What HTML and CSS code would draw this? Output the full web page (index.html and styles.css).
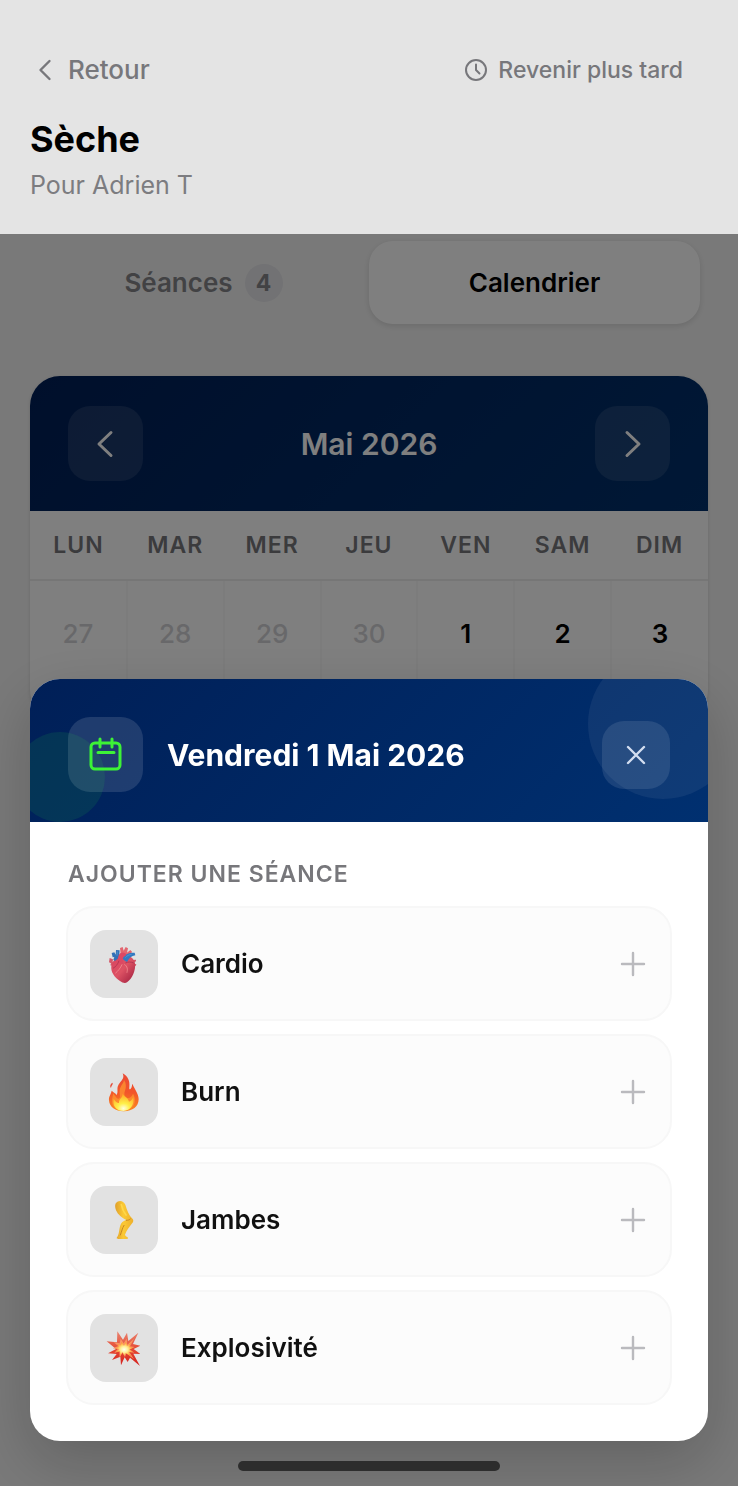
FILE: index.html
```html
<!DOCTYPE html>
<html lang="fr">
<head>
  <meta charset="UTF-8" />
  <meta name="viewport" content="width=device-width, initial-scale=1.0" />
  <title>Sèche</title>
  <link rel="stylesheet" href="styles.css">
</head>
<body>
  <header class="page-header">
    <div class="header-actions">
      <button class="link-btn back" type="button">
        <svg width="30" height="30" viewBox="0 0 30 30"><path d="M19.5 6L10.500 15l9 9" /></svg>
        Retour
      </button>
      <button class="link-btn later" type="button">
        <svg width="24" height="24" viewBox="0 0 24 24"><circle cx="12" cy="12" r="10" /><path d="M12 6.5V12l3.5 3.5" /></svg>
        Revenir plus tard
      </button>
    </div>
    <h1>Sèche</h1>
    <p class="subtitle">Pour Adrien T</p>
  </header>

  <main class="content">
    <nav class="tabs">
      <button class="tab" type="button">Séances <span class="badge">4</span></button>
      <button class="tab active" type="button">Calendrier</button>
    </nav>

    <section class="calendar">
      <div class="calendar-header">
        <button class="nav-btn" type="button" aria-label="Mois précédent">
          <svg width="36" height="36" viewBox="0 0 36 36"><path d="M23 6.500L11 18l12 11.500" /></svg>
        </button>
        <h2>Mai 2026</h2>
        <button class="nav-btn" type="button" aria-label="Mois suivant">
          <svg width="36" height="36" viewBox="0 0 36 36"><path d="M13 6.500L25 18L13 29.500" /></svg>
        </button>
      </div>
      <table class="days">
        <thead>
          <tr><th>LUN</th><th>MAR</th><th>MER</th><th>JEU</th><th>VEN</th><th>SAM</th><th>DIM</th></tr>
        </thead>
        <tbody>
          <tr>
            <td class="out">27</td>
            <td class="out">28</td>
            <td class="out">29</td>
            <td class="out">30</td>
            <td>1</td>
            <td>2</td>
            <td>3</td>
          </tr>
        </tbody>
      </table>
    </section>
  </main>

  <!-- Popup du jour -->
  <div class="overlay">
    <div class="modal" role="dialog" aria-labelledby="modalTitle">
      <div class="modal-header">
        <div class="modal-icon">
          <svg width="36" height="36" viewBox="0 0 36 36"><rect x="3" y="6" width="29" height="26" rx="4" /><path d="M12 2v8M24 2v8M10 15.500h16" /></svg>
        </div>
        <h2 id="modalTitle">Vendredi 1 Mai 2026</h2>
        <button class="close-btn" type="button" aria-label="Fermer">
          <svg width="24" height="24" viewBox="0 0 24 24"><path d="M4 4l16 16M20 4L4 20" /></svg>
        </button>
      </div>
      <div class="modal-body">
        <h3>AJOUTER UNE SÉANCE</h3>
        <div class="sessions">
          <button class="session" type="button">
            <span class="session-icon">
              <svg width="40" height="40" viewBox="0 0 120 120">
                <defs>
                  <linearGradient id="heart" x1="0" y1="0" x2="1" y2="1">
                    <stop offset="0" stop-color="#d9435f" /><stop offset=".5" stop-color="#dd5264" /><stop offset="1" stop-color="#9c1c3c" />
                  </linearGradient>
                </defs>
                <path d="M50 30L48 12l8-3 3 11 6-11 7 4-3 13 10-8 5 5-9 18-22 6z" fill="#e2656f" />
                <path d="M17 42l10 4-1 8 8 5-6 8-9-3 2-6-6-3zM84 48l12-1v5l-8 4zM86 58l11 3-2 5-10-2z" fill="#d4586a" />
                <path d="M28 52C38 36 54 30 66 36c12-2 25 8 27 22 3 22-9 47-24 57-6 4-14 1-21-4C31 100 20 84 22 67c1-6 3-11 6-15z" fill="url(#heart)" />
                <path d="M26 40l-3-13 8-2 4 7 1-14 11 1-1 15c0 8-5 11-13 17l-5-4 3-8z" fill="#326fb7" />
                <path d="M55 43c5-11 18-17 37-17l2 8c-12 2-18 8-25 20-5-2-10-6-14-11z" fill="#3479c0" />
                <path d="M44 56c-5-17 1-32 15-30 9 1 9 9 3 11-8 4-8 15-3 25z" fill="#dc4864" />
                <path d="M54 62c-5 11-11 18-19 25M62 62c9 5 9 14 7 23" fill="none" stroke="#ee8288" stroke-width="3" stroke-linecap="round" />
                <path d="M45 50c-4 12-10 18-18 23M64 57c9-4 17-4 25 0" fill="none" stroke="#a32b4d" stroke-width="2" />
                <path d="M40 22l-1 13M64 41c5-6 11-9 19-10" fill="none" stroke="#5f9fd6" stroke-width="2" />
              </svg>
            </span>
            <span class="session-name">Cardio</span>
            <svg class="plus" width="28" height="28" viewBox="0 0 28 28"><path d="M14 3v22M3 14h22" /></svg>
          </button>

          <button class="session" type="button">
            <span class="session-icon">
              <svg width="40" height="40" viewBox="0 0 120 120">
                <defs>
                  <linearGradient id="flame" x1="0" y1="0" x2="0" y2="1">
                    <stop offset="0" stop-color="#ea4a35" /><stop offset=".5" stop-color="#f2552a" /><stop offset="1" stop-color="#fb8a1f" />
                  </linearGradient>
                  <radialGradient id="core" cx=".5" cy=".85" r=".75">
                    <stop offset="0" stop-color="#fffde0" /><stop offset=".4" stop-color="#fff04a" /><stop offset="1" stop-color="#ffb52a" />
                  </radialGradient>
                </defs>
                <path d="M56 4c16 9 22 23 20 40-1 8 1 10 4 6 4-4 3-10 6-15 2 13 18 27 18 47 0 22-19 35-43 36-25 1-45-12-46-33-1-12 5-16 8-29 8 8 13 7 14 13 6-7 2-17 4-25 2-9 13-17 16-25 2-5 1-10-1-15z" fill="url(#flame)" />
                <path d="M60 24c7 10 7 22 3 32-4 11-1 19 7 22 8 2 14-5 17-13 7 12 8 25 1 36-7 10-18 14-31 14-20 0-34-12-33-29 0-8 3-14 3-22 8 8 10 17 17 16 8-1 1-15 3-26 2-13 11-18 13-30z" fill="#ff9a30" opacity=".7" />
                <path d="M56 66c7 10 16 11 19 23 9-3 10-9 13-13 4 23-9 40-29 41-23 0-34-16-30-37 6 9 9 12 16 13-1-11 10-15 11-27z" fill="url(#core)" />
                <path d="M25 32c4 4-3 8-4 16-5-6-1-12 4-16z" fill="#e54a36" />
              </svg>
            </span>
            <span class="session-name">Burn</span>
            <svg class="plus" width="28" height="28" viewBox="0 0 28 28"><path d="M14 3v22M3 14h22" /></svg>
          </button>

          <button class="session" type="button">
            <span class="session-icon">
              <svg width="40" height="40" viewBox="0 0 120 120">
                <defs>
                  <linearGradient id="leg" x1="0" y1="0" x2="1" y2="0">
                    <stop offset="0" stop-color="#dfa02c" /><stop offset=".45" stop-color="#fbc934" /><stop offset="1" stop-color="#eeb02c" />
                  </linearGradient>
                </defs>
                <path d="M36 9c7-10 23-8 28 5 5 17 10 31 22 43 3 4 2 8-1 12-7 10-17 20-22 35 1 4 6 6 9 9 1 3-1 4-5 4H42c-5 0-5-4-1-8 6-11 4-28 11-39 4-6 9-8 15-10-13-6-25-15-31-29-3-8-4-16 0-23z" fill="url(#leg)" />
                <path d="M67 61c5 0 9-1 12-4M60 76c-5 8-7 19-11 29" fill="none" stroke="#c98522" stroke-width="3" stroke-linecap="round" />
                <path d="M52 14c2 12 7 22 14 31" fill="none" stroke="#ffd84a" stroke-width="5" stroke-linecap="round" />
              </svg>
            </span>
            <span class="session-name">Jambes</span>
            <svg class="plus" width="28" height="28" viewBox="0 0 28 28"><path d="M14 3v22M3 14h22" /></svg>
          </button>

          <button class="session" type="button">
            <span class="session-icon">
              <svg width="40" height="40" viewBox="0 0 120 120">
                <defs>
                  <linearGradient id="burst" x1="0" y1="0" x2="0" y2="1">
                    <stop offset="0" stop-color="#e98572" /><stop offset=".5" stop-color="#e54a33" /><stop offset="1" stop-color="#d4201e" />
                  </linearGradient>
                  <radialGradient id="glow">
                    <stop offset="0" stop-color="#fffff0" /><stop offset=".4" stop-color="#fff09a" /><stop offset=".8" stop-color="#ffb33e" /><stop offset="1" stop-color="#f7853a" />
                  </radialGradient>
                </defs>
                <path d="M40 10l17 25 12-21 4 25 30-25-16 34 22 5-20 10 20 15-21-1 20 37-30-25-7 13-9-14-11 24-2-26-25 10 14-18-26-2 24-13L8 40l31 3z" fill="url(#burst)" />
                <path d="M50 32l9 14 9-14 2 18 20-18-12 23 14 2-15 7 14 10-15-2 14 22-23-18-4 11-8-13-8 15-1-19-15 5 10-12-15-2 17-7-14-11 18 3z" fill="#fa9560" />
                <path d="M52 42l8 11 6-11 3 13 13-11-7 13 12 2-12 6 10 8-12-2 10 16-18-12-4 7-5-10-8 11v-13l-11 2 9-9-12-2 12-5-8-7 13 3z" fill="url(#glow)" />
              </svg>
            </span>
            <span class="session-name">Explosivité</span>
            <svg class="plus" width="28" height="28" viewBox="0 0 28 28"><path d="M14 3v22M3 14h22" /></svg>
          </button>
        </div>
      </div>
    </div>
    <div class="home-bar"></div>
  </div>
</body>
</html>
```
FILE: styles.css
```css
* {
  box-sizing: border-box;
}
body, html {
  margin: 0;
  padding: 0;
  height: 100%;
  font-family: Inter, 'Liberation Sans', sans-serif;
  background-color: #f3f3f3;
  color: #000;
  overflow: hidden;
}
button {
  font-family: inherit;
  border: none;
  padding: 0;
  background: none;
  color: inherit;
  cursor: pointer;
}
h1, h2, h3, p {
  margin: 0;
}
svg {
  display: block;
  flex-shrink: 0;
}
.page-header {
  position: relative;
  z-index: 20;
  background: #e4e4e4;
  padding: 53px 30px 32px;
}
.header-actions {
  display: flex;
  justify-content: space-between;
  align-items: center;
}
.link-btn {
  display: flex;
  align-items: center;
  gap: 8px;
  font-size: 26px;
  line-height: 34px;
  font-weight: 500;
  color: #77777b;
}
.link-btn svg {
  fill: none;
  stroke: currentColor;
  stroke-width: 2.4;
  stroke-linecap: round;
  stroke-linejoin: round;
}
.later {
  font-size: 23px;
  gap: 10px;
  margin-right: 25px;
}
.later svg {
  stroke-width: 2;
}
h1 {
  font-size: 36px;
  line-height: 46px;
  font-weight: 700;
  margin-top: 29px;
}
.subtitle {
  font-size: 25px;
  line-height: 34px;
  margin-top: 6px;
  color: #7c7c80;
}
.content {
  padding: 0 30px;
}
.tabs {
  display: flex;
  padding: 7px 8px 8px;
}
.tab {
  flex: 1;
  display: flex;
  align-items: center;
  justify-content: center;
  gap: 12px;
  height: 83px;
  border-radius: 24px;
  font-size: 26px;
  font-weight: 600;
  color: #858589;
}
.tab.active {
  background: #fff;
  color: #000;
  box-shadow: 0 2px 6px rgba(0, 0, 0, 0.12);
}
.badge {
  width: 38px;
  line-height: 38px;
  border-radius: 50%;
  background: #e4e4e8;
  font-size: 23px;
  font-weight: 700;
}
.calendar {
  margin-top: 44px;
  border-radius: 30px;
  background: #fff;
  overflow: hidden;
  box-shadow: 0 1px 4px rgba(0, 0, 0, 0.12);
}
.calendar-header {
  display: flex;
  align-items: center;
  justify-content: space-between;
  padding: 30px 38px;
  background: linear-gradient(135deg, #001f57, #00306c);
}
.calendar-header h2 {
  font-size: 30px;
  font-weight: 600;
  color: #fff;
}
.nav-btn {
  width: 75px;
  height: 75px;
  border-radius: 22px;
  display: flex;
  align-items: center;
  justify-content: center;
  background: rgba(255, 255, 255, 0.1);
}
.nav-btn svg {
  fill: none;
  stroke: #fff;
  stroke-width: 3;
  stroke-linecap: round;
  stroke-linejoin: round;
}
.days {
  width: 100%;
  table-layout: fixed;
  border-collapse: collapse;
}
.days th {
  height: 69px;
  padding: 0;
  border-bottom: 2px solid #ececec;
  font-size: 23px;
  font-weight: 600;
  letter-spacing: 1px;
  color: #77777b;
}
.days td {
  height: 140px;
  padding: 36px 0 0;
  vertical-align: top;
  text-align: center;
  border-left: 2px solid #f9f9f9;
  font-size: 26px;
  line-height: 34px;
  font-weight: 600;
}
.days td:first-child {
  border-left: none;
}
.days .out {
  font-weight: 500;
  color: #d1d1d4;
}
.overlay {
  position: fixed;
  inset: 0;
  z-index: 10;
  display: flex;
  flex-direction: column;
  justify-content: flex-end;
  padding: 0 30px 15px;
  background: rgba(0, 0, 0, 0.5);
}
.modal {
  background: #fff;
  border-radius: 30px;
  overflow: hidden;
  box-shadow: 0 20px 60px rgba(0, 0, 0, 0.2);
}
.modal-header {
  position: relative;
  display: flex;
  align-items: center;
  gap: 24px;
  padding: 38px 38px 30px;
  overflow: hidden;
  background: linear-gradient(135deg, #001f57, #003070);
}
.modal-header::before {
  content: "";
  position: absolute;
  top: -30px;
  right: -30px;
  width: 150px;
  height: 150px;
  border-radius: 50%;
  background: rgba(255, 255, 255, 0.06);
}
.modal-header::after {
  content: "";
  position: absolute;
  bottom: 0;
  left: -15px;
  width: 90px;
  height: 90px;
  border-radius: 50%;
  background: rgba(40, 255, 60, 0.09);
}
.modal-icon {
  width: 75px;
  height: 75px;
  border-radius: 22px;
  display: flex;
  align-items: center;
  justify-content: center;
  background: rgba(255, 255, 255, 0.12);
}
.modal-icon svg {
  fill: none;
  stroke: #3df236;
  stroke-width: 3;
  stroke-linecap: round;
  stroke-linejoin: round;
}
.modal-header h2 {
  flex: 1;
  font-size: 30px;
  font-weight: 700;
  color: #fff;
}
.close-btn {
  position: relative;
  width: 68px;
  height: 68px;
  border-radius: 22px;
  display: flex;
  align-items: center;
  justify-content: center;
  background: rgba(255, 255, 255, 0.1);
}
.close-btn svg {
  fill: none;
  stroke: #d3def0;
  stroke-width: 2.4;
  stroke-linecap: round;
}
.modal-body {
  padding: 40px 36px 36px;
}
.modal-body h3 {
  padding-left: 2px;
  font-size: 23px;
  line-height: 24px;
  font-weight: 600;
  letter-spacing: 1px;
  color: #77777b;
}
.sessions {
  display: flex;
  flex-direction: column;
  gap: 13px;
  margin-top: 20px;
}
.session {
  display: flex;
  align-items: center;
  gap: 23px;
  height: 115px;
  padding: 0 23px 0 22px;
  border: 2px solid #f7f7f7;
  border-radius: 28px;
  background: #fcfcfc;
}
.session-icon {
  width: 68px;
  height: 68px;
  border-radius: 16px;
  display: flex;
  align-items: center;
  justify-content: center;
  background: #e2e2e2;
}
.session-name {
  flex: 1;
  text-align: left;
  font-size: 26px;
  font-weight: 600;
  color: #111;
}
.plus {
  fill: none;
  stroke: #bababe;
  stroke-width: 2.4;
  stroke-linecap: round;
}
.home-bar {
  align-self: center;
  width: 262px;
  height: 10px;
  margin-top: 20px;
  border-radius: 5px;
  background: #2d2d2d;
}
```
